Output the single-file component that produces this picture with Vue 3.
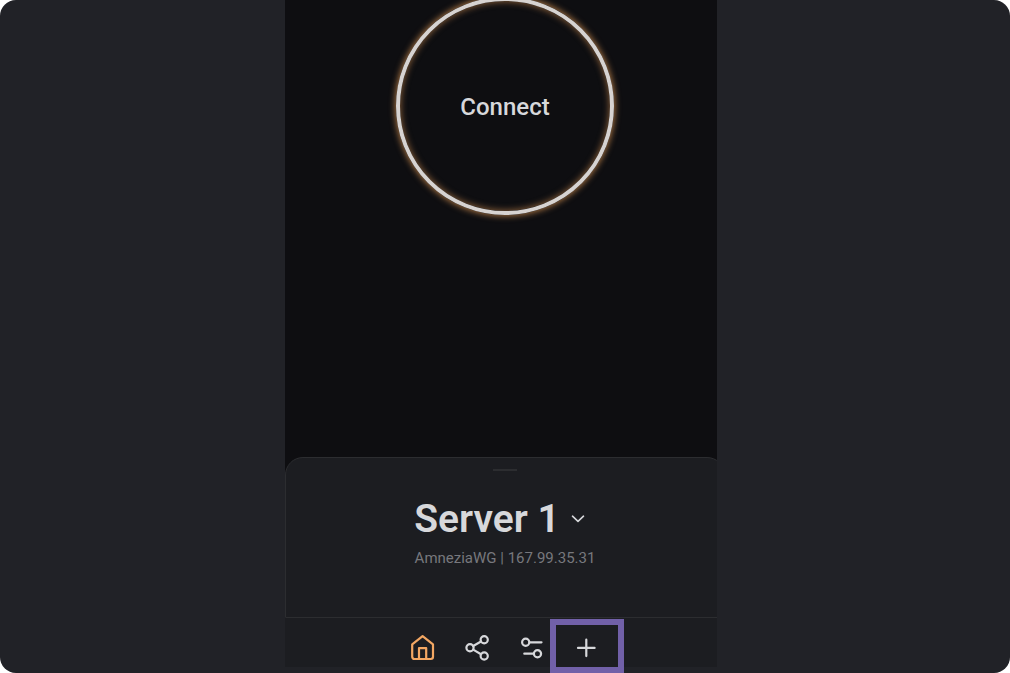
<script setup>
const serverName = 'Server 1'
const protocol = 'AmneziaWG'
const address = '167.99.35.31'
</script>

<template>
  <div class="page">
    <main class="screen">
      <div class="app">
        <section class="stage">
          <button type="button" class="connect">Connect</button>
        </section>

        <section class="sheet">
          <div class="handle"></div>
          <button type="button" class="server">
            <span>{{ serverName }}</span>
            <svg width="16" height="16" viewBox="0 0 16 16" fill="none" stroke="currentColor" stroke-width="1.6" stroke-linecap="round" stroke-linejoin="round" aria-hidden="true">
              <path d="M2.5 5.2 8 10.400l5.500-5.200" />
            </svg>
          </button>
          <p class="details">{{ protocol }} | {{ address }}</p>
        </section>

        <nav class="tabs">
          <button type="button" class="tab active" aria-label="Home">
            <svg width="28" height="28" viewBox="0 0 28 28" aria-hidden="true">
              <path d="M2.200 10.300 12.600 2.200 23 10.300V22.800a2.200 2.200 0 0 1-2.200 2.200H4.400a2.200 2.200 0 0 1-2.200-2.200z" />
              <path d="M9 25V14.200h7.200V25" />
            </svg>
          </button>
          <button type="button" class="tab" aria-label="Share">
            <svg width="28" height="28" viewBox="0 0 28 28" aria-hidden="true">
              <circle cx="20.200" cy="5.700" r="3.600" />
              <circle cx="6" cy="13.800" r="3.600" />
              <circle cx="20.200" cy="22" r="3.600" />
              <path d="m9.200 12 7.800-4.500M9.200 15.600l7.800 4.600" />
            </svg>
          </button>
          <button type="button" class="tab" aria-label="Settings">
            <svg width="28" height="28" viewBox="0 0 28 28" aria-hidden="true">
              <circle cx="7.700" cy="8.300" r="3.600" />
              <path d="M11.500 8.300H23.500" />
              <circle cx="19.500" cy="19.700" r="3.600" />
              <path d="M15.800 19.700H6.300" />
            </svg>
          </button>
          <button type="button" class="tab marked" aria-label="Add server">
            <svg width="28" height="28" viewBox="0 0 28 28" aria-hidden="true">
              <path d="M14.300 5.700v16.400M6 13.900h16.600" />
            </svg>
          </button>
        </nav>
      </div>
    </main>
  </div>
</template>

<style>
html {
  background: #ffffff;
}
</style>

<style scoped>
.page {
  box-sizing: border-box;
  min-height: 100vh;
  display: grid;
  grid-template-columns: 285fr 432px 293fr;
  padding-bottom: 6px;
  border-radius: 16px;
  overflow: hidden;
  background: #212227;
  font-family: Roboto, "Liberation Sans", sans-serif;
  color: #d7d8db;
}

button {
  margin: 0;
  padding: 0;
  border: 0;
  background: none;
  font: inherit;
  color: inherit;
  cursor: pointer;
}

.screen {
  grid-column: 2;
  display: flex;
  overflow-x: clip;
  background: #0e0e11;
}

.app {
  flex: 0 0 440px;
  display: flex;
  flex-direction: column;
}

.stage {
  flex: 1;
  display: flex;
  justify-content: center;
  align-items: flex-start;
}

.connect {
  width: 218px;
  height: 218px;
  margin-top: -3px;
  padding-top: 2px;
  border: 4px solid #d7d3d1;
  border-radius: 50%;
  box-shadow: 0 0 6px 1px #a87443, inset 0 0 6px 1px #7d5735;
  font-size: 24px;
  font-weight: 500;
}

.sheet {
  box-sizing: border-box;
  height: 161px;
  display: flex;
  flex-direction: column;
  align-items: center;
  border: 1px solid #2c2d30;
  border-radius: 18px 18px 0 0;
  background: #1c1d21;
}

.handle {
  width: 24px;
  height: 2px;
  margin-top: 11px;
  background: #2c2d30;
}

.server {
  display: flex;
  align-items: center;
  gap: 10px;
  margin-top: 24px;
  padding-right: 10px;
  font-size: 39px;
  font-weight: 600;
  line-height: 48px;
}

.details {
  margin: 5px 0 0;
  font-size: 15px;
  line-height: 20px;
  color: #77787d;
}

.tabs {
  box-sizing: border-box;
  height: 49px;
  display: flex;
  justify-content: center;
  align-items: flex-end;
  padding-bottom: 5px;
  background: #1c1d21;
}

.tab {
  position: relative;
  display: flex;
  justify-content: center;
  width: 54px;
}

.tab svg {
  fill: none;
  stroke: currentColor;
  stroke-width: 2.200;
  stroke-linecap: round;
  stroke-linejoin: round;
}

.tab.active {
  color: #f3a763;
}

.marked::after {
  content: "";
  position: absolute;
  inset: -15px -11px -11px -9px;
  border: 6px solid #7160a8;
}
</style>
